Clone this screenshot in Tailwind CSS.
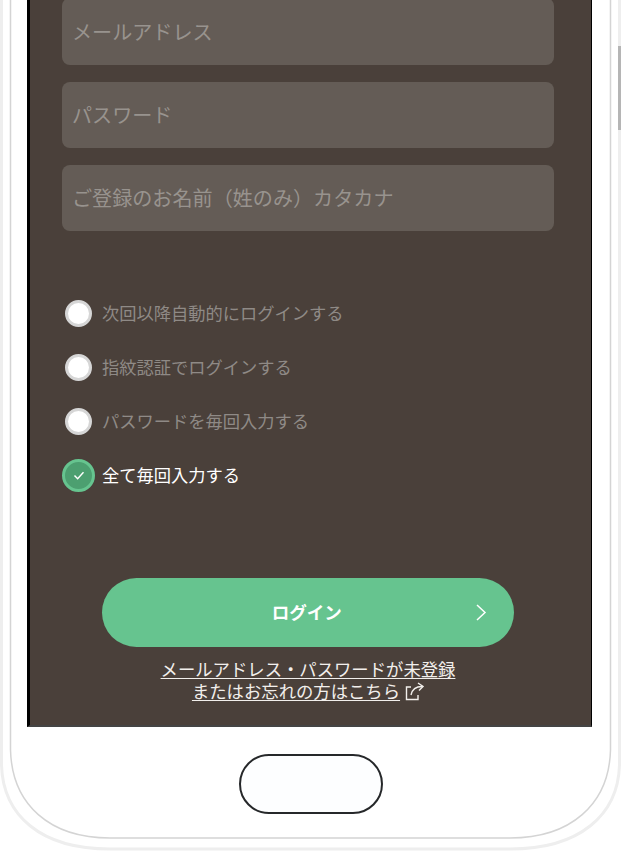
<!DOCTYPE html>
<html lang="ja">
<head>
  <meta charset="UTF-8" />
  <title>ログイン</title>
  <script src="https://cdn.jsdelivr.net/npm/@tailwindcss/browser@4"></script>
</head>
<body class="bg-white">
  <div class="relative w-[621px] h-[851px] overflow-hidden bg-white font-['Noto_Sans_CJK_JP','Noto_Sans',sans-serif]">
    <!-- phone frame -->
    <svg class="absolute inset-0" width="621" height="851" fill="none">
      <path d="M1.5 0V765C3 815 40 849 110 849H510C580 849 618 815 619.5 765V0" stroke="#eeeeee" stroke-width="3"/>
      <path d="M10.5 0V750C12 805 50 838 110 838H510C570 838 609 805 610.5 750V0" stroke="#d4d4d4" stroke-width="1.5"/>
    </svg>
    <div class="absolute right-0 top-[46px] w-[3px] h-[84px] bg-[#b5b5b5]"></div>

    <!-- screen -->
    <div class="relative ml-[27px] w-[565px] h-[727px] flex flex-col bg-[#4a403a] border-l-[3px] border-r border-b-2 border-l-black border-r-black border-b-[#444]">
      <div class="ml-[32px] w-[492px] -mt-[2px] flex flex-col gap-[17px]">
        <input class="w-full h-[67px] px-[10px] pb-[1px] rounded-[8px] bg-[#645c56] text-[20.1px] placeholder:text-[#98938e]" placeholder="メールアドレス" />
        <input class="w-full h-[66px] px-[10px] pb-[1px] rounded-[8px] bg-[#645c56] text-[20.1px] placeholder:text-[#98938e]" placeholder="パスワード" />
        <input class="w-full h-[66px] px-[10px] pb-[1px] rounded-[8px] bg-[#645c56] text-[20.1px] placeholder:text-[#98938e]" placeholder="ご登録のお名前（姓のみ）カタカナ" />
      </div>

      <div class="mt-[66px] flex flex-col gap-[22px] text-[17.25px] leading-[32px] text-[#8f8a86]">
        <div class="flex items-center h-[32px]">
          <span class="ml-[35px] w-[27px] h-[27px] rounded-full bg-white border-[3px] border-[#d6d6d6]"></span>
          <span class="ml-[10px]">次回以降自動的にログインする</span>
        </div>
        <div class="flex items-center h-[32px]">
          <span class="ml-[35px] w-[27px] h-[27px] rounded-full bg-white border-[3px] border-[#d6d6d6]"></span>
          <span class="ml-[10px]">指紋認証でログインする</span>
        </div>
        <div class="flex items-center h-[32px]">
          <span class="ml-[35px] w-[27px] h-[27px] rounded-full bg-white border-[3px] border-[#d6d6d6]"></span>
          <span class="ml-[10px]">パスワードを毎回入力する</span>
        </div>
        <div class="flex items-center h-[32px] text-white">
          <span class="ml-[32px] w-[33px] h-[33px] rounded-full bg-[#4c9f70] border-[3px] border-[#66c48f] flex items-center justify-center">
            <svg width="12" height="9" viewBox="0 0 13 10" fill="none" stroke="#fff" stroke-width="1.6"><path d="M1.5 5l3.5 3.5 6.5-7"/></svg>
          </span>
          <span class="ml-[7px]">全て毎回入力する</span>
        </div>
      </div>

      <button class="relative mt-[87px] ml-[71.5px] w-[412.5px] h-[69px] rounded-full bg-[#66c48f] text-white text-[17.5px] font-bold">
        <span class="relative right-[1px]">ログイン</span>
        <svg class="absolute right-[27px] top-[25px]" width="12" height="19" viewBox="0 0 12 19" fill="none" stroke="#fff" stroke-width="1.5"><path d="M2 2l8 7.5-8 7.5"/></svg>
      </button>

      <div class="mt-[11px] pr-[5px] flex flex-col items-center text-[17.35px] leading-[22px] text-[#f2efec]">
        <a class="underline underline-offset-2">メールアドレス・パスワードが未登録</a>
        <div class="flex items-center gap-[5px]">
          <a class="underline underline-offset-2">またはお忘れの方はこちら</a>
          <svg width="19" height="19" viewBox="0 0 19 19" fill="none" stroke="#f2efec" stroke-width="1.4"><path d="M6 5H1.5V17.5H13V13"/><path d="M6 13C7 8 11 4.5 17 4.5"/><path d="M13 1L18 4.5L14 8.5"/></svg>
        </div>
      </div>
    </div>

    <!-- home button -->
    <div class="mx-auto mt-[27px] w-[144px] h-[60px] rounded-[30px] border-[2.5px] border-[#26282a] bg-[#fdfeff]"></div>
  </div>
</body>
</html>
